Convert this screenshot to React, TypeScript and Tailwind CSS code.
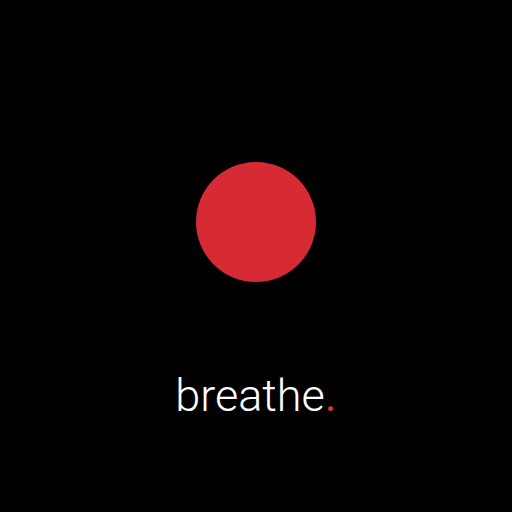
export default function App() {
  return (
    <div className="w-[512px] h-[512px] bg-black flex flex-col items-center pt-[162px]">
      <div className="w-[120px] h-[120px] rounded-full bg-[#d62a34]" />
      <p className="mt-[88px] text-white text-[45px] leading-[52px] font-light" style={{ fontFamily: 'Roboto, "Noto Sans", sans-serif' }}>
        breathe<span className="text-[#e0323a] font-normal">.</span>
      </p>
    </div>
  );
}
